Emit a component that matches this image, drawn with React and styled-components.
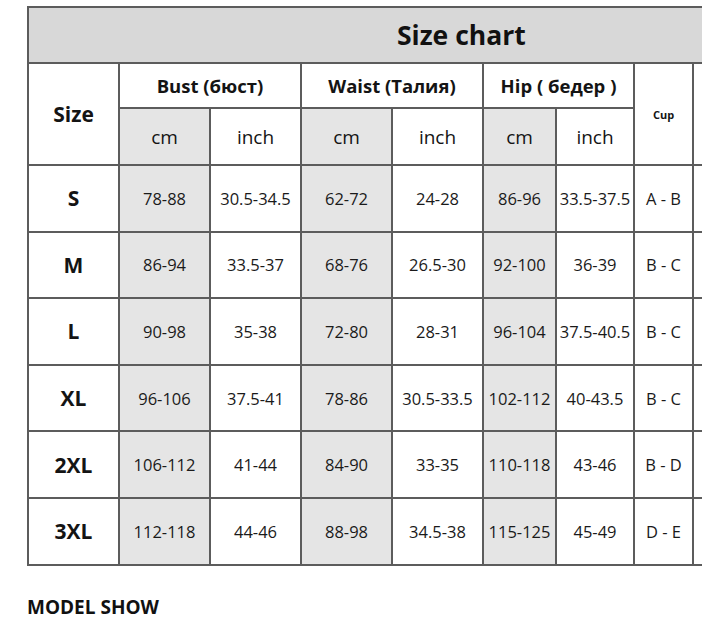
import React from 'react';
import styled, { createGlobalStyle } from 'styled-components';

const GlobalStyle = createGlobalStyle`
  body {
    margin: 0;
    background: #fff;
    font-family: "Open Sans", "Noto Sans", "DejaVu Sans", sans-serif;
    color: #141414;
  }
`;

const columns = [91, 91, 91, 91, 91, 73, 78, 59, 60];

const rows = [
  { size: 'S', bust: ['78-88', '30.5-34.5'], waist: ['62-72', '24-28'], hip: ['86-96', '33.5-37.5'], cup: 'A - B' },
  { size: 'M', bust: ['86-94', '33.5-37'], waist: ['68-76', '26.5-30'], hip: ['92-100', '36-39'], cup: 'B - C' },
  { size: 'L', bust: ['90-98', '35-38'], waist: ['72-80', '28-31'], hip: ['96-104', '37.5-40.5'], cup: 'B - C' },
  { size: 'XL', bust: ['96-106', '37.5-41'], waist: ['78-86', '30.5-33.5'], hip: ['102-112', '40-43.5'], cup: 'B - C' },
  { size: '2XL', bust: ['106-112', '41-44'], waist: ['84-90', '33-35'], hip: ['110-118', '43-46'], cup: 'B - D' },
  { size: '3XL', bust: ['112-118', '44-46'], waist: ['88-98', '34.5-38'], hip: ['115-125', '45-49'], cup: 'D - E' },
];

const App = () => (
  <Page>
    <GlobalStyle />
    <Clip>
      <Chart>
        <colgroup>
          {columns.map((w, i) => <col key={i} style={{ width: w }} />)}
        </colgroup>
        <tbody>
          <tr>
            <TitleCell colSpan={9}>Size chart</TitleCell>
          </tr>
          <tr>
            <HeadCell rowSpan={2} big>Size</HeadCell>
            <GroupCell colSpan={2}>Bust (бюст)</GroupCell>
            <GroupCell colSpan={2}>Waist (Талия)</GroupCell>
            <GroupCell colSpan={2}>Hip ( бедер )</GroupCell>
            <HeadCell rowSpan={2} small>Cup</HeadCell>
            <HeadCell rowSpan={2} />
          </tr>
          <tr>
            <UnitCell shaded>cm</UnitCell>
            <UnitCell>inch</UnitCell>
            <UnitCell shaded>cm</UnitCell>
            <UnitCell>inch</UnitCell>
            <UnitCell shaded>cm</UnitCell>
            <UnitCell>inch</UnitCell>
          </tr>
          {rows.map(r => (
            <DataRow key={r.size}>
              <SizeCell>{r.size}</SizeCell>
              <Cell shaded>{r.bust[0]}</Cell>
              <Cell>{r.bust[1]}</Cell>
              <Cell shaded>{r.waist[0]}</Cell>
              <Cell>{r.waist[1]}</Cell>
              <Cell shaded>{r.hip[0]}</Cell>
              <Cell>{r.hip[1]}</Cell>
              <Cell>{r.cup}</Cell>
              <Cell />
            </DataRow>
          ))}
        </tbody>
      </Chart>
    </Clip>
    <SectionTitle>MODEL SHOW</SectionTitle>
  </Page>
);

const Page = styled.div`
  padding: 6px 0 0 27px;
  width: 720px;
  height: 621px;
  box-sizing: border-box;
  overflow: hidden;
`;

const Clip = styled.div`
  width: 675px;
  overflow: hidden;
`;

const Chart = styled.table`
  border-collapse: collapse;
  table-layout: fixed;
  width: 725px;

  td {
    border: 2px solid #5c5c5c;
    text-align: center;
    vertical-align: middle;
    padding: 0;
    white-space: nowrap;
  }
`;

const TitleCell = styled.td`
  && {
    text-align: left;
    padding-left: 368px;
  }
  height: 54px;
  background: #d8d8d8;
  font-size: 26.5px;
  font-weight: 700;
  color: #111;
`;

const HeadCell = styled.td`
  font-weight: 700;
  font-size: ${p => (p.big ? '21px' : p.small ? '11px' : '16px')};
`;

const GroupCell = styled.td`
  height: 43px;
  font-weight: 700;
  font-size: 18.5px;
`;

const UnitCell = styled.td`
  height: 55px;
  font-size: 19px;
  background: ${p => (p.shaded ? '#e5e5e5' : '#fff')};
`;

const DataRow = styled.tr`
  height: 66.6px;
`;

const Cell = styled.td`
  font-size: 16.5px;
  color: #1a1a1a;
  background: ${p => (p.shaded ? '#e5e5e5' : '#fff')};
`;

const SizeCell = styled.td`
  font-size: 21px;
  font-weight: 700;
`;

const SectionTitle = styled.div`
  margin-top: 28px;
  font-size: 19px;
  font-weight: 700;
  color: #111;
`;

export default App;
